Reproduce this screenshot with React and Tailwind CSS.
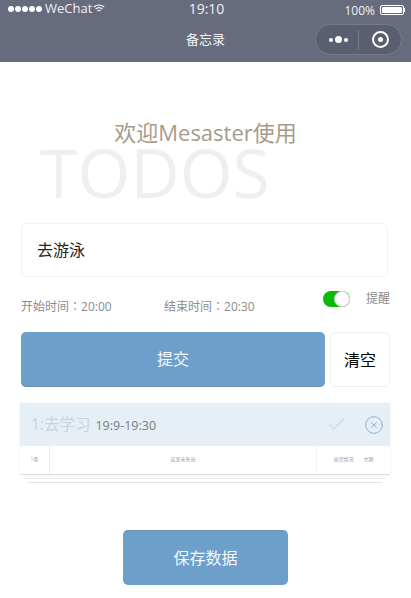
import { Check, CircleX } from "lucide-react";

const cjk = "font-['Open_Sans','Noto_Sans_CJK_SC',sans-serif]";

function Header() {
  return (
    <div className="h-[62px] bg-[#666b7d] text-white flex flex-col">
      {/* status bar */}
      <div className="h-[17px] leading-[17px] pl-[8px] pr-[6px] grid grid-cols-3 grid-rows-[17px] items-center">
        <div className="flex items-center gap-[1px] text-[13px] text-[#f1f1f4]">
          <div className="flex gap-[1px] mr-[2px]">
            <span className="w-[6px] h-[6px] rounded-full bg-white" />
            <span className="w-[6px] h-[6px] rounded-full bg-white" />
            <span className="w-[6px] h-[6px] rounded-full bg-white" />
            <span className="w-[6px] h-[6px] rounded-full bg-white" />
            <span className="w-[6px] h-[6px] rounded-full bg-white" />
          </div>
          <span>WeChat</span>
          <svg width="12" height="9" viewBox="0 0 12 9" fill="none" stroke="white" strokeWidth="1.1">
            <path d="M0.8 3 Q6 -1 11.2 3" />
            <path d="M2.6 5 Q6 2.2 9.4 5" />
            <path d="M4.4 7 Q6 5.6 7.6 7" />
          </svg>
        </div>
        <div className="text-center text-[14px] text-[#f1f1f4]">19:10</div>
        <div className="flex items-center justify-end gap-[5px] text-[12px] text-[#f1f1f4] pt-[3px]">
          <span>100%</span>
          <div className="flex items-center">
            <div className="w-[24px] h-[10px] border border-white rounded-[2px] p-[1px]">
              <div className="w-full h-full bg-white rounded-[1px]" />
            </div>
            <div className="w-[1px] h-[4px] bg-white" />
          </div>
        </div>
      </div>
      {/* nav bar */}
      <div className="relative flex-1 flex items-center justify-center">
        <span className="text-[13px] text-[#f3f3f5]">备忘录</span>
        <div className="absolute left-[315px] top-[7px] w-[87px] h-[31px] rounded-full bg-[#5a5f70] border border-[#767b8c] flex items-center">
          <div className="w-[42px] flex items-center justify-center gap-[2px] pl-[2px]">
            <span className="w-[4px] h-[4px] rounded-full bg-white" />
            <span className="w-[7px] h-[7px] rounded-full bg-white" />
            <span className="w-[4px] h-[4px] rounded-full bg-white" />
          </div>
          <div className="w-px h-[20px] bg-[#767b8c]" />
          <div className="flex-1 flex items-center justify-center">
            <div className="w-[17px] h-[17px] rounded-full border-2 border-white flex items-center justify-center">
              <span className="w-[5px] h-[5px] rounded-full bg-white" />
            </div>
          </div>
        </div>
      </div>
    </div>
  );
}

function TodoCard() {
  return (
    <div className="mt-[16px] ml-[20px] w-[370px]">
      <div className="rounded-[2px] border-b border-[#dcdcdc] shadow-[0_0_3px_rgba(0,0,0,0.08)]">
        <div className="h-[43px] bg-[#e6eff6] flex items-center pl-[11px]">
          <span className="text-[15.5px] text-[#ccd2da]">1:去学习</span>
          <span className="text-[12.5px] text-[#777c82] ml-[5px] mt-[3px]">19:9-19:30</span>
          <Check className="ml-auto text-[#d2d8dc]" size={21} strokeWidth={1.5} />
          <CircleX className="ml-[17px] mr-[6px] text-[#7ba7c7]" size={20} strokeWidth={1} />
        </div>
        <div className="h-[28px] bg-white flex items-center text-[5px] text-[#9a9ab8]">
          <div className="w-[30px] h-full flex items-center justify-center border-r border-[#eeeeee]">1条</div>
          <div className="w-[267px] h-full flex items-center justify-center border-r border-[#f3f3f3]">这里未售出</div>
          <div className="flex-1 flex items-center justify-center gap-[10px]">
            <span>出货情况</span>
            <span>主题</span>
          </div>
        </div>
      </div>
      <div className="mx-[4px] h-[4px] border-b border-[#efefef]" />
      <div className="mx-[8px] h-[4px] border-b border-[#e4e4e4]" />
    </div>
  );
}

export default function App() {
  return (
    <div className={`h-[598px] w-[411px] bg-white overflow-hidden ${cjk}`}>
      <Header />

      <div className="relative pt-[56px]">
        <div className="text-center text-[22px] leading-[28px] text-[#a89b89]">欢迎Mesaster使用</div>
        <div className="absolute left-[40px] top-[83px] text-[68px] leading-[54px] font-normal text-[#efefef]">
          TODOS
        </div>
      </div>

      <div className="relative">
        <div className="mt-[77px] ml-[21px] w-[367px] h-[54px] rounded-[5px] border border-[#f2f2f2] flex items-center pl-[15px] text-[16px] text-[#222222]">
          去游泳
        </div>

        <div className="h-[55px] ml-[21px] flex text-[12px] text-[#8c8c8c]">
          <span className="w-[143px] mt-[20px]">
            开始时间<span className="font-['Noto_Sans_CJK_TC',sans-serif]">：</span>20:00
          </span>
          <span className="w-[159px] mt-[20px]">
            结束时间<span className="font-['Noto_Sans_CJK_TC',sans-serif]">：</span>20:30
          </span>
          <div className="w-[27px] h-[16px] mt-[14px] rounded-full bg-[#09bb07] flex justify-end">
            <span className="w-[16px] h-[16px] rounded-full bg-white border border-[#dddddd]" />
          </div>
          <span className="ml-[16px] mt-[14px] text-[12px] leading-[16px]">提醒</span>
        </div>

        <div className="ml-[21px] flex gap-[5px] h-[55px]">
          <div className="w-[304px] rounded-[5px] bg-[#6ca0cb] border-b border-[#6b8fae] flex items-center justify-center text-[16px] text-[#f3f8fc]">
            提交
          </div>
          <div className="w-[60px] rounded-[5px] border border-[#efefef] flex items-center justify-center text-[16px] text-black">
            清空
          </div>
        </div>

        <TodoCard />

        <div className="mt-[47px] mx-auto w-[165px] h-[55px] rounded-[5px] bg-[#6ca0cb] border-t border-[#7191ad] flex items-center justify-center text-[16px] text-[#f3f8fc]">
          保存数据
        </div>
      </div>
    </div>
  );
}
